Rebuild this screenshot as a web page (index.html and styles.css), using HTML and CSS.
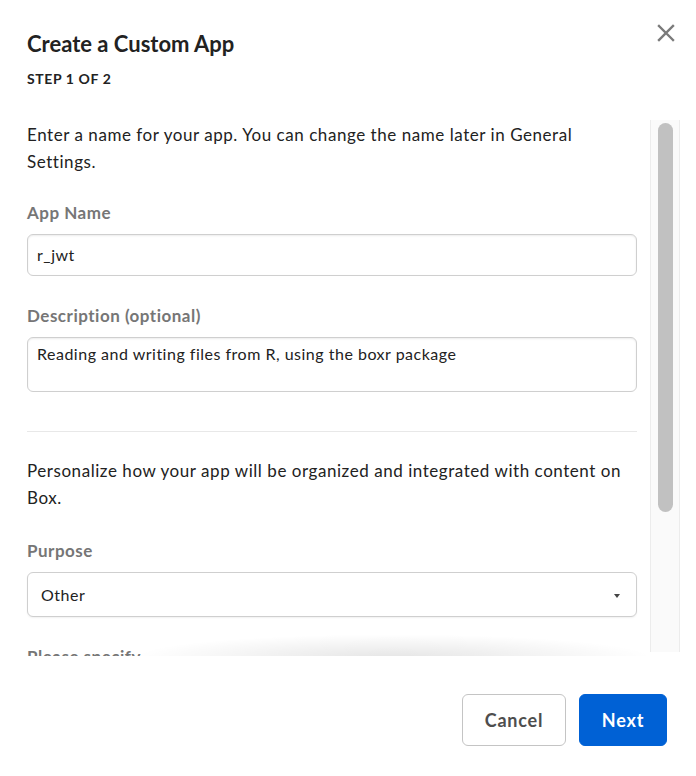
FILE: index.html
```html
<!DOCTYPE html>
<html lang="en">
<head>
<meta charset="utf-8">
<title>Create a Custom App</title>
<link rel="stylesheet" href="styles.css">
</head>
<body>
<div class="modal">
  <header class="modal-header">
    <div class="titles">
      <h1 class="title">Create a Custom App</h1>
      <div class="step">STEP 1 OF 2</div>
    </div>
    <button class="close" aria-label="Close">
      <svg width="18" height="18" viewBox="0 0 18 18"><path d="M2 2L16 16M16 2L2 16" stroke="#7a7a7a" stroke-width="2.4" stroke-linecap="square" fill="none"/></svg>
    </button>
  </header>
  <div class="modal-body">
    <div class="scroll-content">
      <p class="intro">Enter a name for your app. You can change the name later in General Settings.</p>
      <div class="field field-first">
        <label class="label">App Name</label>
        <div class="input">r_jwt</div>
      </div>
      <div class="field">
        <label class="label">Description (optional)</label>
        <div class="input textarea">Reading and writing files from R, using the boxr package</div>
      </div>
      <hr class="divider">
      <p class="intro">Personalize how your app will be organized and integrated with content on Box.</p>
      <div class="field field-purpose">
        <label class="label">Purpose</label>
        <div class="input select"><span>Other</span><span class="caret"></span></div>
      </div>
      <div class="field">
        <label class="label">Please specify</label>
        <div class="input"></div>
      </div>
    </div>
    <div class="fade"></div>
    <div class="scrollbar"><div class="thumb"></div></div>
  </div>
  <footer class="modal-footer">
    <button class="btn btn-secondary">Cancel</button>
    <button class="btn btn-primary">Next</button>
  </footer>
</div>
</body>
</html>
```
FILE: styles.css
```css
* { box-sizing: border-box; }
html, body { margin: 0; padding: 0; background: #fff; }
body { font-family: Lato, "Open Sans", "Liberation Sans", sans-serif; color: #222; }
.modal { width: 696px; height: 776px; display: flex; flex-direction: column; }
.modal-header { display: flex; justify-content: space-between; align-items: flex-start; padding: 30px 21px 0 27px; height: 120px; }
.title { margin: 0; font-size: 22px; line-height: 28px; font-weight: 700; color: #222; }
.step { margin-top: 11px; font-size: 14px; line-height: 20px; font-weight: 700; color: #222; letter-spacing: 0.6px; }
.close { border: 0; background: none; padding: 0; margin-top: -6px; width: 18px; height: 18px; cursor: pointer; }
.close svg { display: block; }
.modal-body { position: relative; height: 538px; display: flex; align-items: flex-start; padding-left: 27px; gap: 13px; overflow: hidden; }
.scroll-content { width: 610px; flex: none; padding-top: 1px; }
.intro { margin: 0; font-size: 17px; line-height: 27px; letter-spacing: 0.55px; color: #222; }
.field { margin-top: 27px; }
.field-first { margin-top: 25px; }
.field-purpose { margin-top: 27px; }
.label { display: block; font-size: 17px; line-height: 24px; letter-spacing: 0.5px; font-weight: 700; color: #767676; padding-top: 1px; margin-bottom: 9px; }
.input { height: 42px; border: 1px solid #cfcfcf; border-radius: 6px; padding: 0 9px; font-size: 16px; line-height: 40px; letter-spacing: 0.5px; color: #222; box-shadow: inset 0 1px 2px rgba(0,0,0,0.08); background: #fff; }
.textarea { height: 55px; line-height: 24px; padding-top: 4px; }
.select { height: 45px; line-height: 43px; padding: 0 13px; display: flex; justify-content: space-between; align-items: center; box-shadow: 0 1px 2px rgba(0,0,0,0.06); }
.caret { width: 0; height: 0; border-left: 3.5px solid transparent; border-right: 3.5px solid transparent; border-top: 4px solid #444; margin-right: 3px; margin-top: 2px; }
.divider { border: 0; border-top: 1px solid #e8e8e8; margin: 39px 0 25px; height: 0; }
.fade { position: absolute; left: 130px; right: 40px; bottom: 0; height: 24px; background: radial-gradient(ellipse at 50% 100%, rgba(0,0,0,0.10), rgba(0,0,0,0) 70%); pointer-events: none; }
.modal-body::after { content: ""; position: absolute; left: 0; right: 0; bottom: 0; height: 2px; background: #fff; }
.scrollbar { flex: none; width: 30px; height: 532px; border-left: 1px solid #ececec; border-right: 1px solid #ececec; background: #fafafa; padding: 3px 6px 0 7px; }
.thumb { width: 15px; height: 389px; border-radius: 8px; background: #c1c1c1; }
.modal-footer { display: flex; justify-content: flex-end; gap: 13px; padding: 36px 29px 0 0; }
.btn { height: 52px; border-radius: 6px; font-family: Lato, "Open Sans", "Liberation Sans", sans-serif; font-size: 18px; font-weight: 700; letter-spacing: 0.8px; cursor: pointer; }
.btn-secondary { width: 104px; background: #fff; border: 1px solid #c4c4c4; color: #4e4e4e; }
.btn-primary { width: 88px; background: #0061d5; border: 1px solid #0061d5; color: #fff; }
```
